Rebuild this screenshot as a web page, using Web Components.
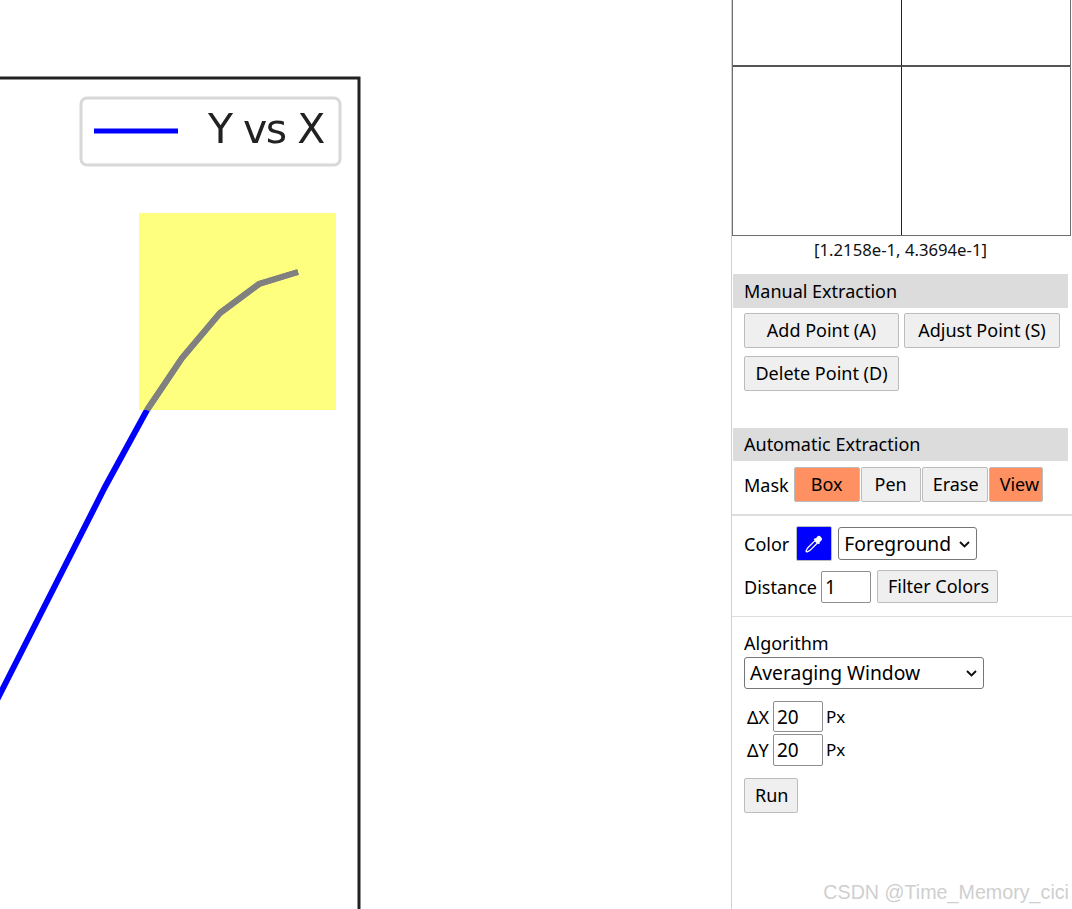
<!DOCTYPE html>
<html>
<head>
<meta charset="utf-8">
<title>Plot digitizer</title>
<style>
  html, body { margin: 0; height: 100%; overflow: hidden; background: #fff; }
  body { font-family: "Noto Sans", "Open Sans", sans-serif; color: #000; }
</style>
</head>
<body>

<template id="wd-app">
  <style>
    :host { display: flex; height: 909px; position: relative; overflow: hidden; }
    .watermark {
      position: absolute;
      right: 3px;
      bottom: 5px;
      font: 19.7px "Liberation Sans", sans-serif;
      color: #cfcfcf;
      white-space: nowrap;
    }
  </style>
  <slot></slot>
  <div class="watermark">CSDN @Time_Memory_cici</div>
</template>

<template id="wd-plot">
  <style>
    :host { display: block; width: 731px; flex: none; }
    svg { display: block; }
    text { font-family: "DejaVu Sans", sans-serif; font-size: 41px; letter-spacing: -1.5px; fill: #222; }
  </style>
  <svg width="731" height="909" viewBox="0 0 731 909">
    <defs><filter id="soft"><feGaussianBlur stdDeviation="0.5"/></filter></defs>
    <g filter="url(#soft)">
      <path d="M-2 78H359V909" fill="none" stroke="#222" stroke-width="3"/>
      <rect x="81" y="98" width="259" height="67" rx="6" fill="#fff" stroke="#d8d8d8" stroke-width="3"/>
      <path d="M94 131H178" stroke="#0000ff" stroke-width="5"/>
      <text x="208" y="143">Y vs X</text>
      <path d="M-3 700L105 487L147 410L182 358L220 313L259 284L298 272" fill="none" stroke="#0000ff" stroke-width="6"/>
      <rect x="139" y="213" width="197" height="197" fill="#ffff00" fill-opacity=".5"/>
      <path d="M147 410L182 358L220 313L259 284L298 272" fill="none" stroke="#808080" stroke-width="6"/>
    </g>
  </svg>
</template>

<template id="wd-sidebar">
  <style>
    :host {
      display: block;
      flex: none;
      width: 340px;
      border-left: 1px solid #d0d0d0;
      font-size: 18px;
      line-height: 24px;
    }
  </style>
  <slot></slot>
</template>

<template id="wd-zoom-view">
  <style>
    :host { display: block; }
    .view {
      height: 236px;
      box-sizing: border-box;
      width: 339px;
      border: 1px solid #6e6e6e;
      border-top: 0;
      display: grid;
      grid-template-columns: 169px 1fr;
      grid-template-rows: 67px 1fr;
    }
    .cell:nth-child(odd) { border-right: 1px solid #222; }
    .cell:nth-child(-n+2) { border-bottom: 2px solid #555; }
    .pos { text-align: center; font-size: 16.7px; line-height: 20px; padding-top: 4px; height: 34px; margin-right: 3px; color: #111; white-space: nowrap; }
  </style>
  <div class="view"><div class="cell"></div><div class="cell"></div><div class="cell"></div><div class="cell"></div></div>
  <div class="pos"><slot></slot></div>
</template>

<template id="wd-heading">
  <style>
    :host {
      display: block;
      width: 335px;
      height: 34px;
      margin-left: 1px;
      box-sizing: border-box;
      background: #dcdcdc;
      padding: 5px 0 0 11px;
      line-height: 24px;
      white-space: nowrap;
    }
  </style>
  <slot></slot>
</template>

<template id="wd-button">
  <style>
    :host { display: inline-block; vertical-align: top; }
    button {
      display: block;
      width: var(--w, auto);
      height: var(--h, 35px);
      padding: 0 10px 1px;
      margin: 0;
      font: inherit;
      color: #000;
      background: #efefef;
      border: 1px solid #bcbcbc;
      border-radius: 2px;
      white-space: nowrap;
    }
    :host([active]) button { background: #ff9061; }
  </style>
  <button type="button"><slot></slot></button>
</template>

<template id="wd-row">
  <style>
    :host { display: flex; align-items: center; padding-left: 12px; white-space: nowrap; }
  </style>
  <slot></slot>
</template>

<template id="wd-field">
  <style>
    :host { display: inline-block; }
    input {
      display: block;
      box-sizing: border-box;
      width: var(--w, 50px);
      height: var(--h, 32px);
      padding: 0 3px;
      margin: 0;
      font: inherit;
      font-size: 19px;
      color: #000;
      background: #fff;
      border: 1px solid #8f8f8f;
      border-radius: 2px;
      outline: 0;
    }
  </style>
  <input type="text">
</template>

<template id="wd-select">
  <style>
    :host { display: inline-block; position: relative; }
    select {
      display: block;
      appearance: none;
      box-sizing: border-box;
      width: var(--w, 139px);
      height: var(--h, 33px);
      padding: 0 0 0 5px;
      margin: 0;
      font: inherit;
      font-size: 19.3px;
      color: #000;
      background: #fff;
      border: 1px solid #767676;
      border-radius: 3px;
      outline: 0;
    }
    /* native arrow is too thin here, draw it on top */
    svg { position: absolute; right: 7px; top: 50%; margin-top: -3px; pointer-events: none; }
  </style>
  <select></select>
  <svg width="11" height="7" viewBox="0 0 11 7"><path d="M1 1L5.5 5.5L10 1" fill="none" stroke="#111" stroke-width="1.9"/></svg>
</template>

<template id="wd-swatch">
  <style>
    :host { display: inline-block; }
    button {
      display: flex;
      align-items: center;
      justify-content: center;
      box-sizing: border-box;
      width: 36px;
      height: 35px;
      padding: 0;
      margin: 0;
      background: #0000ff;
      border: 1px solid #bcbcbc;
      border-radius: 2px;
    }
  </style>
  <button type="button">
    <svg width="20" height="20" viewBox="0 0 20 20">
      <path d="M10.4 4.6L15.4 9.6" stroke="#fff" stroke-width="2" fill="none"/>
      <path d="M13 3C14.2 1.4 15.6 1.6 16.9 2.9C18.3 4.3 18.5 5.7 17 6.9L15 8.6L11.4 5Z" fill="#fff"/>
      <path d="M11 6.6L13.4 9L6 16.4L3 18L2 17L3.6 14Z" fill="none" stroke="#fff" stroke-width="1.3" stroke-linejoin="round"/>
    </svg>
  </button>
</template>

<script>
  function makeEl(name, setup) {
    const tmpl = document.getElementById(name);
    customElements.define(name, class extends HTMLElement {
      constructor() {
        super();
        this.attachShadow({mode: 'open'}).appendChild(tmpl.content.cloneNode(true));
      }
      connectedCallback() {
        if (setup) setup(this, this.shadowRoot);
      }
    });
  }

  makeEl('wd-app');
  makeEl('wd-plot');
  makeEl('wd-sidebar');
  makeEl('wd-zoom-view');
  makeEl('wd-heading');
  makeEl('wd-button');
  makeEl('wd-row');
  makeEl('wd-field', (el, root) => {
    root.querySelector('input').value = el.getAttribute('value') || '';
  });
  makeEl('wd-select', (el, root) => {
    const opt = document.createElement('option');
    opt.textContent = el.getAttribute('value');
    root.querySelector('select').appendChild(opt);
  });
  makeEl('wd-swatch');
</script>

<style>
  hr.sep { border: 0; margin: 0; background: #ddd; width: 340px; }
</style>

<wd-app>
  <wd-plot></wd-plot>
  <wd-sidebar>
    <wd-zoom-view>[1.2158e-1, 4.3694e-1]</wd-zoom-view>

    <wd-heading>Manual Extraction</wd-heading>
    <wd-row style="margin-top:5px">
      <wd-button style="--w:155px">Add Point (A)</wd-button>
      <wd-button style="--w:156px;margin-left:5px">Adjust Point (S)</wd-button>
    </wd-row>
    <wd-row style="margin-top:8px">
      <wd-button style="--w:155px">Delete Point (D)</wd-button>
    </wd-row>

    <wd-heading style="margin-top:37px;height:33px;padding-top:4px">Automatic Extraction</wd-heading>
    <wd-row style="margin-top:6px;height:35px">
      <span style="margin-right:5px">Mask</span>
      <wd-button active style="--w:66px">Box</wd-button>
      <wd-button style="--w:60px;margin-left:1px">Pen</wd-button>
      <wd-button style="--w:66px;margin-left:1px">Erase</wd-button>
      <wd-button active style="--w:54px;margin-left:1px">View</wd-button>
    </wd-row>
    <hr class="sep" style="height:2px;margin-top:12px">

    <wd-row style="margin-top:10px;height:35px">
      <span style="margin-right:7px">Color</span>
      <wd-swatch></wd-swatch>
      <wd-select value="Foreground" style="margin-left:6px"></wd-select>
    </wd-row>
    <wd-row style="margin-top:9px;height:33px">
      <span style="margin-right:4px">Distance</span>
      <wd-field value="1"></wd-field>
      <wd-button style="--w:121px;--h:33px;margin-left:6px">Filter Colors</wd-button>
    </wd-row>
    <hr class="sep" style="height:1px;margin-top:13px">

    <wd-row style="margin-top:14px;height:24px">Algorithm</wd-row>
    <wd-row style="margin-top:2px">
      <wd-select value="Averaging Window" style="--w:240px;--h:32px"></wd-select>
    </wd-row>
    <wd-row style="margin-top:12px;height:31px;padding-left:15px">
      <span style="width:26px">ΔX</span>
      <wd-field value="20" style="--h:31px"></wd-field>
      <span style="margin-left:3px;font-size:17px">Px</span>
    </wd-row>
    <wd-row style="margin-top:2px;height:32px;padding-left:15px">
      <span style="width:26px">ΔY</span>
      <wd-field value="20"></wd-field>
      <span style="margin-left:3px;font-size:17px">Px</span>
    </wd-row>
    <wd-row style="margin-top:12px">
      <wd-button style="--w:54px">Run</wd-button>
    </wd-row>
  </wd-sidebar>
</wd-app>

</body>
</html>
